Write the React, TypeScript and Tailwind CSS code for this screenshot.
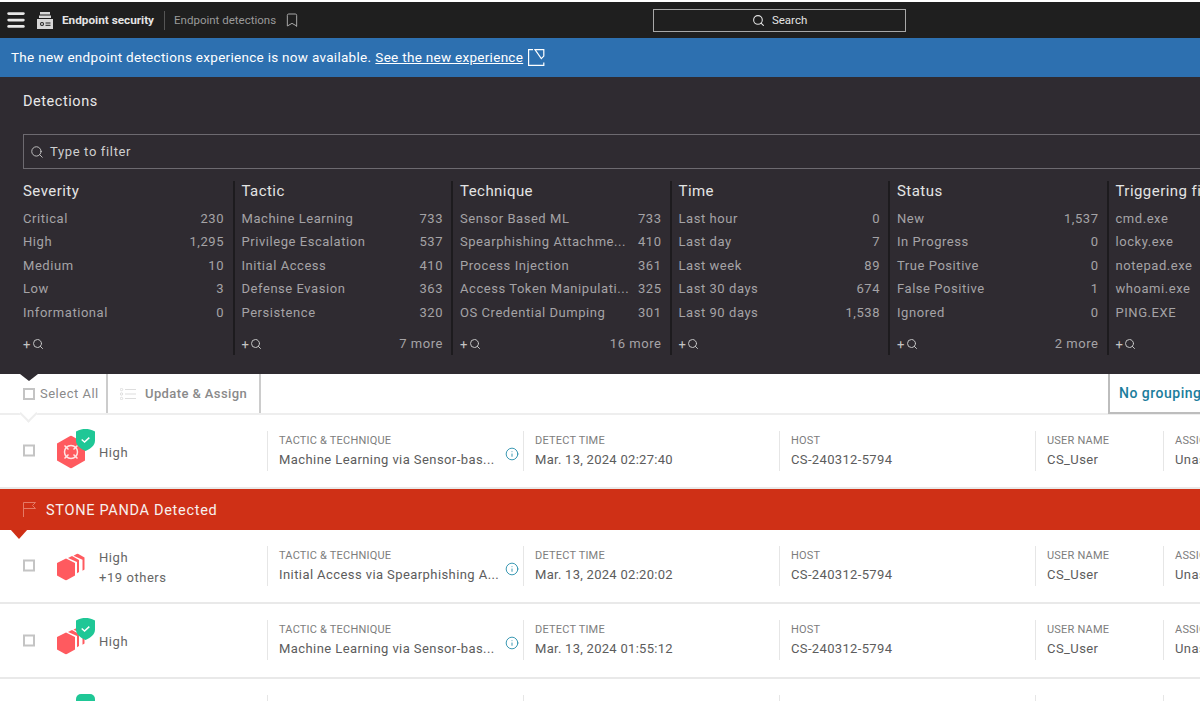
import { Bookmark, Info, Menu, Search } from "lucide-react";

const facets = [
  {
    title: "Severity",
    more: "",
    rows: [["Critical", "230"], ["High", "1,295"], ["Medium", "10"], ["Low", "3"], ["Informational", "0"]],
  },
  {
    title: "Tactic",
    more: "7 more",
    rows: [["Machine Learning", "733"], ["Privilege Escalation", "537"], ["Initial Access", "410"], ["Defense Evasion", "363"], ["Persistence", "320"]],
  },
  {
    title: "Technique",
    more: "16 more",
    rows: [["Sensor Based ML", "733"], ["Spearphishing Attachme...", "410"], ["Process Injection", "361"], ["Access Token Manipulati...", "325"], ["OS Credential Dumping", "301"]],
  },
  {
    title: "Time",
    more: "",
    rows: [["Last hour", "0"], ["Last day", "7"], ["Last week", "89"], ["Last 30 days", "674"], ["Last 90 days", "1,538"]],
  },
  {
    title: "Status",
    more: "2 more",
    rows: [["New", "1,537"], ["In Progress", "0"], ["True Positive", "0"], ["False Positive", "1"], ["Ignored", "0"]],
  },
  {
    title: "Triggering file",
    more: "",
    rows: [["cmd.exe", ""], ["locky.exe", ""], ["notepad.exe", ""], ["whoami.exe", ""], ["PING.EXE", ""]],
  },
];

const AppIcon = () => (
  <svg width="16" height="17" viewBox="0 0 16 17" fill="#d8d8d8">
    <rect x="3" y="0" width="10" height="2.5" />
    <rect x="2" y="3.5" width="12" height="2.5" />
    <path d="M0 7h16v10H0z" />
    <circle cx="5" cy="12" r="2" fill="#1f1f1f" />
    <circle cx="5" cy="12" r="1" fill="#d8d8d8" />
    <rect x="8.5" y="10.5" width="5" height="1" fill="#1f1f1f" />
    <rect x="8.5" y="12.8" width="5" height="1" fill="#1f1f1f" />
  </svg>
);

const ExternalIcon = () => (
  <svg width="17" height="17" viewBox="0 0 17 17" fill="none" stroke="#ffffff" strokeWidth="1.2">
    <path d="M5 .6H.6v15.8h15.2V13.5" />
    <path d="M7 .6h8.8v6.5l-2.5 2.5z" />
  </svg>
);

const Shield = ({ top }: { top: string }) => (
  <span className={`absolute left-[19px] ${top}`}>
    <svg width="19" height="23" viewBox="0 0 20 23">
      <path d="M0 2.5C4 .5 7 0 10 0s6 .5 10 2.5V12c0 5-4 8.5-10 11C4 20.5 0 17 0 12z" fill="#1fc796" />
      <path d="M6 11l3 2.6 5-4.6" fill="none" stroke="#ffffff" strokeWidth="1.6" />
    </svg>
  </span>
);

const SingleIcon = () => (
  <svg width="28" height="33" viewBox="0 0 28 33">
    <path d="M14 0l14 8v17l-14 8-14-8V8z" fill="#ff5a5f" />
    <circle cx="14" cy="16.5" r="6.5" fill="none" stroke="#ffe3e3" strokeWidth="1.5" />
    <path d="M7.5 10l4 4M20.5 10l-4 4M7.5 23l4-4M20.5 23l-4-4" stroke="#ffe3e3" strokeWidth="1.5" />
  </svg>
);

const StackIcon = () => (
  <svg width="28" height="27" viewBox="0 0 28 27" fill="#ff5a5f">
    <path d="M0 9.5L9 5l9 4.5v12.5L9 27 0 22z" />
    <path d="M11 4.5L15 2.5l7 4v12l-2 1.2V8.5z" />
    <path d="M16.5 2.2L20.5 0l7 4v12l-2 1.2V6.3z" />
  </svg>
);

const RowCheckbox = () => <span className="w-3 h-3 border-2 border-[#c4c4c4] bg-white shrink-0" />;

type CellProps = { label: string; value: string; info?: boolean; wide?: boolean; spacing?: string };

const Cell = ({ label, value, info, wide = true, spacing = "tracking-[0.42px]" }: CellProps) => (
  <div className={`${wide ? "w-[256px]" : "w-[128px]"} h-10 shrink-0 border-l border-[#e6e6e6] pt-[3px] pl-[11px] pr-[4px] whitespace-nowrap overflow-hidden`}>
    <div className="text-[11px] leading-[14px] text-[#7d7d7d] tracking-[0.2px]">{label}</div>
    <div className={`mt-[3px] flex items-center justify-between text-[13px] leading-[18px] text-[#5c5c5c] ${spacing}`}>
      <span>{value}</span>
      {info && <Info size={14} className="text-[#1f8aa8] -mt-3 shrink-0" strokeWidth={1.5} />}
    </div>
  </div>
);

type RowProps = {
  icon: "single" | "stack";
  shield?: boolean;
  second?: string;
  tactic: string;
  time: string;
  height: string;
};

const Row = ({ icon, shield, second, tactic, time, height }: RowProps) => (
  <div className={`${height} flex border-b-2 border-[#e9e9e9] pl-[23px] shrink-0`}>
    <div className="flex items-center self-stretch shrink-0 -translate-y-[0.5px]">
      <RowCheckbox />
      <div className="relative ml-[22px] w-[28px] shrink-0 flex items-center translate-y-[1px]">
        {icon === "single" ? <SingleIcon /> : <StackIcon />}
        {shield && <Shield top={icon === "single" ? "-top-[7px]" : "-top-[10px]"} />}
      </div>
      <div className="ml-[14px] w-[168px] shrink-0 pt-[3px] text-[13px] leading-[20px] text-[#666666] tracking-[0.55px]">
        <div>High</div>
        {second && <div>{second}</div>}
      </div>
    </div>
    <div className="flex mt-[16px]">
      <Cell label="TACTIC & TECHNIQUE" value={tactic} info />
      <Cell label="DETECT TIME" value={time} spacing="tracking-[0.28px]" />
      <Cell label="HOST" value="CS-240312-5794" spacing="tracking-[0.35px]" />
      <Cell label="USER NAME" value="CS_User" wide={false} />
      <Cell label="ASSIGNED TO" value="Unassigned" wide={false} />
    </div>
  </div>
);

export default function App() {
  return (
    <div className="relative w-[1200px] h-[701px] overflow-hidden bg-white font-['Roboto',sans-serif] flex flex-col">
      <header className="h-[36px] mt-[2px] shrink-0 bg-[#1f1f1f] flex items-center">
        <Menu size={22} strokeWidth={3} className="ml-[5px] text-[#e8e8e8]" />
        <span className="ml-[10px] flex"><AppIcon /></span>
        <span className="ml-[9px] mt-[1px] text-[11.75px] font-bold text-[#e4e4e4] whitespace-nowrap">Endpoint security</span>
        <span className="ml-[10px] h-[19px] border-l border-[#555555]" />
        <span className="ml-[9px] mt-[1px] text-[11.5px] text-[#9a9a9a] whitespace-nowrap">Endpoint detections</span>
        <Bookmark size={16} className="ml-[8px] text-[#a8a8a8]" strokeWidth={1.5} />
        <div className="ml-[353px] mt-[1px] w-[253px] h-[23px] border border-[#a8a8a8] flex items-center justify-center gap-[7px] text-[11.5px] text-[#e4e4e4]">
          <Search size={13} strokeWidth={2} />
          Search
        </div>
      </header>

      <div className="h-[39px] shrink-0 bg-[#2d70b0] flex items-center pl-[11px] text-[13.5px] tracking-[0.29px] text-white whitespace-nowrap">
        The new endpoint detections experience is now available.
        <span className="ml-[4px] underline">See the new experience</span>
        <span className="ml-[5px] flex"><ExternalIcon /></span>
      </div>

      <section className="h-[297px] shrink-0 bg-[#2f2b31] pl-[23px]">
        <h1 className="pt-[15px] text-[14.5px] leading-[20px] tracking-[0.55px] text-[#e8e8e8]">Detections</h1>
        <div className="mt-[22px] w-[1300px] h-[35px] border border-[#6d6a70] flex items-center pl-[6px] gap-[6px] text-[13px] tracking-[0.65px] text-[#cfcfcf]">
          <Search size={14} strokeWidth={1.5} />
          Type to filter
        </div>
        <div className="mt-[12px] flex -ml-[23px]">
          {facets.map((f, i) => (
            <div
              key={f.title}
              className={`${i === 0 ? "w-[232.5px] pl-[23px] pr-[8.5px]" : "w-[218.5px] border-l-2 border-[#1d1b1e] pl-[7px] pr-[8px]"} ${i === 5 ? "w-[300px]" : ""} shrink-0 h-[174px] flex flex-col whitespace-nowrap`}
            >
              <div className="h-[22px] text-[15px] leading-[20px] tracking-[0.45px] text-[#e4e4e4]">{f.title}</div>
              <div className="mt-[6.5px] flex flex-col gap-[5.5px] text-[13px] leading-[18px] tracking-[0.55px] text-[#a5a3a6]">
                {f.rows.map(([name, count]) => (
                  <div key={name} className="flex justify-between">
                    <span>{name}</span>
                    <span>{count}</span>
                  </div>
                ))}
              </div>
              <div className="mt-[13.5px] h-[18px] flex items-center justify-between text-[13px] leading-[18px] tracking-[0.55px] text-[#a5a3a6]">
                <span className="flex items-center text-[#c4c4c4]">
                  <span className="text-[13px] leading-none">+</span>
                  <Search size={12} strokeWidth={2} className="ml-[1px]" />
                </span>
                <span>{f.more}</span>
              </div>
            </div>
          ))}
        </div>
      </section>

      <div className="h-[41px] shrink-0 border-b-2 border-[#eeeeee] flex items-stretch text-[13px]">
        <div className="w-[108px] pl-[23px] flex items-center gap-[5px] border-r-2 border-[#cccccc] tracking-[0.5px] text-[#8a8a8a]">
          <RowCheckbox />
          Select All
        </div>
        <div className="w-[153px] flex items-center pl-[12px] gap-[9px] border-r-2 border-[#cccccc] font-medium tracking-[0.4px] text-[#8a8a8a]">
          <svg width="16" height="12" viewBox="0 0 16 12" fill="none" stroke="#dddddd" strokeWidth="1">
            <circle cx="1.5" cy="1.5" r="1.2" />
            <circle cx="1.5" cy="6" r="1.2" />
            <circle cx="1.5" cy="10.5" r="1.2" />
            <path d="M5 1.5h11M5 6h11M5 10.5h11" />
          </svg>
          Update &amp; Assign
        </div>
        <div className="ml-auto w-[92px] border-l-2 border-b-2 border-[#bdbdbd] flex items-center pl-[9px] -mb-[1px] text-[14px] font-medium tracking-[0.5px] text-[#1b7d9c] whitespace-nowrap overflow-hidden">
          No grouping
        </div>
      </div>

      <Row icon="single" shield tactic="Machine Learning via Sensor-bas..." time="Mar. 13, 2024 02:27:40" height="h-[74px]" />

      <div className="h-[41px] shrink-0 bg-[#cf3016] flex items-center pl-[23px] text-[14.5px] tracking-[0.7px] text-[#f7f0ee] relative">
        <svg width="13" height="15" viewBox="0 0 13 15" fill="none" stroke="#e57a66" strokeWidth="1">
          <path d="M.5 15V.5h12L9.5 3.5l3 3H.5" />
        </svg>
        <span className="ml-[10px] pt-[2px]">STONE PANDA Detected</span>
        <span className="absolute left-[10px] top-[40px] w-0 h-0 border-l-[9px] border-r-[9px] border-t-[10px] border-l-transparent border-r-transparent border-t-[#cf3016]" />
      </div>

      <Row icon="stack" second="+19 others" tactic="Initial Access via Spearphishing A..." time="Mar. 13, 2024 02:20:02" height="h-[74px]" />
      <Row icon="stack" shield tactic="Machine Learning via Sensor-bas..." time="Mar. 13, 2024 01:55:12" height="h-[75px]" />

      <div className="relative h-[30px] shrink-0">
        <span className="absolute left-[76px] top-[15px] w-[19px] h-[10px] bg-[#1fc796] rounded-t-[5px]" />
        <span className="absolute left-[267px] top-[16px] h-[10px] border-l border-[#e6e6e6]" />
        <span className="absolute left-[523px] top-[16px] h-[10px] border-l border-[#e6e6e6]" />
        <span className="absolute left-[779px] top-[16px] h-[10px] border-l border-[#e6e6e6]" />
        <span className="absolute left-[1035px] top-[16px] h-[10px] border-l border-[#e6e6e6]" />
        <span className="absolute left-[1163px] top-[16px] h-[10px] border-l border-[#e6e6e6]" />
      </div>

      {/* notches under the panel and toolbar */}
      <span className="absolute left-[20px] top-[374px] w-0 h-0 border-l-[9px] border-r-[9px] border-t-[7px] border-l-transparent border-r-transparent border-t-[#2f2b31]" />
      <span className="absolute left-[22px] top-[407px] w-[13px] h-[13px] rotate-45 bg-white border-r-2 border-b-2 border-[#eeeeee]" />
    </div>
  );
}
